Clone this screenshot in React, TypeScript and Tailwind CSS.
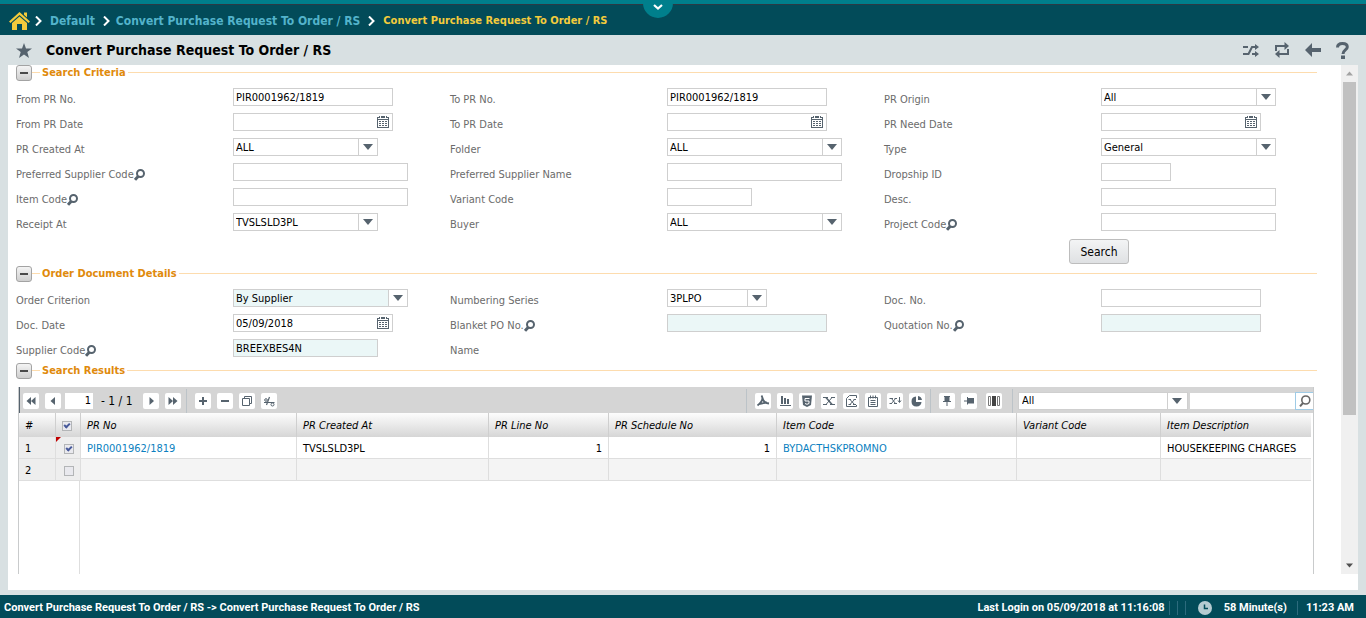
import React, { useId } from "react";

const SLATE = "#56636e";

function Caret() {
  return (
    <svg width="10" height="6" viewBox="0 0 10 6" aria-hidden="true">
      <path d="M0 0h10L5 6z" fill={SLATE} />
    </svg>
  );
}

function CalendarIcon() {
  return (
    <svg width="12" height="12" viewBox="0 0 12 12" shapeRendering="crispEdges" fill={SLATE} aria-hidden="true">
      <path d="M0 1h1v11H0zM11 1h1v11h-1zM0 11h12v1H0zM0 1h2v1H0zM10 1h2v1h-2zM2 0h1v2H2zM9 0h1v2H9zM4 0h4v2H4zM1 3h10v1H1z" />
      <path d="M2 5h2v1H2zM5 5h2v1H5zM8 5h2v1H8zM2 7h2v1H2zM5 7h2v1H5zM8 7h2v1H8zM2 9h2v1H2zM5 9h2v1H5zM8 9h2v1H8z" />
    </svg>
  );
}

function LensIcon() {
  return (
    <svg width="11" height="12" viewBox="0 0 11 12" fill="none" stroke={SLATE} aria-hidden="true">
      <circle cx="6.5" cy="4.5" r="3.500" strokeWidth="2" />
      <path d="M4.500 7L1 10.800" strokeWidth="3" />
    </svg>
  );
}

type FieldProps = {
  label: string;
  kind?: "text" | "date" | "select" | "none";
  value?: string;
  width?: string;
  lens?: boolean;
  tinted?: boolean;
};

const boxClass = "h-[18px] border border-[#cfcfcf] pl-0.5 pt-px text-[11px] leading-4 text-black outline-none";

function Field({ label, kind = "text", value = "", width = "w-40", lens, tinted }: FieldProps) {
  const id = useId();
  const bg = tinted ? "bg-[#ebf7f7]" : "bg-white";
  return (
    <div className="grid h-[25px] grid-cols-2 items-start">
      <div className="flex h-6 items-center whitespace-nowrap text-[#6b6b6b]">
        {kind === "none" ? <span>{label}</span> : <label htmlFor={id}>{label}</label>}
        {lens && (
          <button type="button" aria-label={`Look up ${label}`}>
            <LensIcon />
          </button>
        )}
      </div>
      {kind === "text" && <input id={id} defaultValue={value} className={`${boxClass} ${bg} ${width}`} />}
      {kind === "date" && (
        <div className={`relative ${width}`}>
          <input id={id} defaultValue={value} className={`${boxClass} ${bg} block w-full`} />
          <button type="button" aria-label={`Pick ${label}`} className="absolute inset-y-0 right-1 flex items-center">
            <CalendarIcon />
          </button>
        </div>
      )}
      {kind === "select" && (
        <div className={`relative ${width}`}>
          <select id={id} defaultValue={value} className={`${boxClass} ${bg} block w-full appearance-none rounded-none`}>
            <option>{value}</option>
          </select>
          <span className="pointer-events-none absolute inset-y-px right-px flex w-[19px] items-center justify-center border-l border-[#cfcfcf] bg-white pr-px">
            <Caret />
          </span>
        </div>
      )}
    </div>
  );
}

function SectionTitle({ children }: { children: string }) {
  return (
    <div className="mr-px flex h-4 items-center">
      <button
        type="button"
        aria-label={`Collapse ${children}`}
        className="flex size-4 items-center justify-center rounded-[3px] border border-[#a3a3a3] bg-gradient-to-b from-[#f4f4f4] to-[#cfcfcf]"
      >
        <span className="h-0.5 w-2 bg-[#4a4a4a]" />
      </button>
      <span className="mb-0.5 h-px w-2 bg-[#fddcae]" />
      <h2 className="px-0.5 text-[11px] font-bold leading-4 text-[#e08a0c]">{children}</h2>
      <span className="mb-0.5 h-px flex-1 bg-[#fddcae]" />
    </div>
  );
}

function Tool({ label, children }: { label: string; children: React.ReactNode }) {
  return (
    <button type="button" aria-label={label} className="flex size-4 shrink-0 items-center justify-center rounded-xs bg-white">
      <svg width="16" height="16" viewBox="0 0 16 16" fill={SLATE} stroke="none" aria-hidden="true">
        {children}
      </svg>
    </button>
  );
}

function Divider() {
  return <span className="h-6 w-px shrink-0 bg-[#bcc3c8]" />;
}

function Chevron() {
  return (
    <svg width="7" height="10" viewBox="0 0 7 10" fill="none" stroke="#fff" strokeWidth="2" aria-hidden="true">
      <path d="M1 0.5L5.5 5L1 9.5" />
    </svg>
  );
}

const columns = [
  { title: "PR No", width: "w-[216px]" },
  { title: "PR Created At", width: "w-48" },
  { title: "PR Line No", width: "w-[120px]" },
  { title: "PR Schedule No", width: "w-42" },
  { title: "Item Code", width: "w-60" },
  { title: "Variant Code", width: "w-36" },
  { title: "Item Description", width: "" },
];

function Tick({ checked, label }: { checked: boolean; label: string }) {
  return (
    <input
      type="checkbox"
      defaultChecked={checked}
      aria-label={label}
      className="relative block size-2.5 appearance-none border border-[#b3b5b7] bg-[#e9e9ee] after:absolute after:left-[2px] after:top-0 after:hidden after:h-1.5 after:w-1 after:rotate-45 after:border-b-2 after:border-r-2 after:border-[#47599a] checked:after:block"
    />
  );
}

function ResultsGrid() {
  const cell = "h-[22px] border-b border-r border-[#dedede] px-1.5 pb-0 pt-0.5 font-normal";
  const rowNumber = "bg-[#eeeeee]";
  const head = "h-6 border-r border-[#cfcfcf] pb-0 pt-px px-1.5 font-normal";
  return (
    <div className="ml-0.5 mr-1 flex h-[187px] flex-col border-x border-[#c9cbcc]">
      <div className="flex h-[26px] items-center border-l border-[#56636e] bg-[#d5d5d5] pl-[3px] pt-0.5">
        <div className="flex items-center gap-1.5">
          <Tool label="First page"><path d="M8 4v8L3.5 8zM12.5 4v8L8 8z" /></Tool>
          <Tool label="Previous page"><path d="M10 4v8L5.500 8z" /></Tool>
        </div>
        <input aria-label="Page" defaultValue="1" className="ml-1 h-4 w-7 bg-white pr-0.5 text-right text-[11px] text-black outline-none" />
        <span className="ml-2 w-[42px] whitespace-nowrap text-xs text-black">- 1 / 1</span>
        <div className="flex items-center gap-1.5">
          <Tool label="Next page"><path d="M6.500 4v8L11 8z" /></Tool>
          <Tool label="Last page"><path d="M3.500 4v8L8 8zM8 4v8l4.500-4z" /></Tool>
        </div>
        <div className="ml-[5px] mr-2 flex"><Divider /></div>
        <div className="flex items-center gap-1.5">
          <Tool label="Add row"><path d="M7 4h2v3h3v2H9v3H7V9H4V7h3z" /></Tool>
          <Tool label="Remove row"><path d="M4 7h8v2H4z" /></Tool>
          <Tool label="Copy row"><path d="M5.500 5.500v-2h7v7h-2M3.500 5.500h7v7h-7z" fill="none" stroke={SLATE} /></Tool>
          <Tool label="Cut row">
            <g fill="none" stroke={SLATE}><path d="M3 9.500h10.500M5.500 12L8.500 4" strokeWidth="1.200" /><circle cx="11.500" cy="11.500" r="1.500" /><circle cx="5" cy="7" r="1.300" /></g>
          </Tool>
        </div>

        <div className="ml-auto mr-2 flex"><Divider /></div>
        <div className="flex items-center gap-1.5">
          <Tool label="Export to PDF"><path d="M6.500 2.500c2 3 .5 6.500-4 10M7.500 5c.5 3 2 5 6.500 5.500M4 11l8-1.500" fill="none" stroke={SLATE} strokeWidth="1.800" /></Tool>
          <Tool label="Report"><path d="M3 12h11v1H3zM4 3h2v8H4zM7 5h2v6H7zM10 6h2v5h-2z" /></Tool>
          <Tool label="Export to HTML"><path d="M3 2.500h10l-1 9.500-4 2-4-2z" /><path d="M10.500 5.500H6v2.500h4v2.500l-2 .8-2-.8" fill="none" stroke="#fff" /></Tool>
          <Tool label="Export to spreadsheet"><path d="M2 4h5v1H2zM10 4h4v1h-4zM2 11h4v1H2zM9 11h5v1H9z" /><path d="M5 4.500l6 7" fill="none" stroke={SLATE} strokeWidth="1.600" /><path d="M11 4.500l-6 7" fill="none" stroke={SLATE} /></Tool>
          <Tool label="Spreadsheet document"><path d="M13.500 5V2.500h-7l-3 3v8h10V12M5.500 6.500H8M10.500 6.500H13M5.500 11.500H8M10 11.500h3M7 6.500l4.500 5M11.500 6.500l-4.500 5" fill="none" stroke={SLATE} /></Tool>
          <Tool label="Export to text"><path d="M3.500 4.500h9v9h-9zM5.500 7.500h5M5.500 9.500h5M5.500 11.500h5M5.500 2.500v3M10.500 2.500v3M8 2.500v3" fill="none" stroke={SLATE} /></Tool>
          <Tool label="Import spreadsheet"><path d="M2.500 5.500H6M7.500 5.500H10M2.500 10.500H5M7 10.500h3M4.500 5.500l4 5M8.500 5.500l-4 5M12.500 4v5M11 7.500l1.500 2L14 7.500" fill="none" stroke={SLATE} /></Tool>
          <Tool label="Chart"><path d="M7 3.500v5.500h5.500a5 5 0 1 1-5.500-5.500zM9 3a5 5 0 0 1 4 4H9z" /></Tool>
        </div>
        <div className="ml-[5px] mr-2 flex"><Divider /></div>
        <div className="flex items-center gap-1.5">
          <Tool label="Pin column"><path d="M5 3h6v1h-.5v4H12v1H8.500v4h-1V9H4V8h1.500V4H5z" /></Tool>
          <Tool label="Pin row"><path d="M3 7.500h3V4h1v1h6v5.500H7v1H6V8.500H3z" /></Tool>
        </div>
        <div className="ml-[9px] flex">
          <Tool label="Column layout"><path d="M2.500 3.500h2v9h-2zM11.500 3.500h2v9h-2z" fill="none" stroke="#777" /><path d="M6 3h4v10H6z" fill="#444" /></Tool>
        </div>
        <div className="ml-2.5 mr-[5px] flex"><Divider /></div>
        <div className="relative w-[170px]">
          <select aria-label="Filter column" defaultValue="All" className="block h-[18px] w-full appearance-none border border-[#cfcfcf] bg-white pl-[3px] text-[11px] leading-4 text-black outline-none">
            <option>All</option>
          </select>
          <span className="pointer-events-none absolute inset-y-px right-0 flex w-[21px] items-center justify-center border-l border-[#cfcfcf] pr-0.5">
            <Caret />
          </span>
        </div>
        <input aria-label="Filter text" className="ml-0.5 h-4 w-[105px] bg-white px-0.5 text-[11px] outline-none" />
        <button type="button" aria-label="Apply filter" className="flex h-[18px] w-[18px] items-center justify-center border-y border-l border-[#9fcbe6] bg-white">
          <svg width="12" height="12" viewBox="0 0 12 12" fill="none" stroke="#666" aria-hidden="true">
            <circle cx="6.800" cy="5" r="4" strokeWidth="1.600" />
            <path d="M4 8L1 11.300" strokeWidth="2" />
          </svg>
        </button>
      </div>
      <div className="flex flex-1 flex-col pr-0.5">
        <table className="w-full table-fixed border-separate border-spacing-0 text-left text-[11px] leading-4 text-black">
          <thead>
            <tr className="bg-gradient-to-b from-[#fdfdfd] to-[#d6d6d6] italic">
              <th className={`${head} w-[37px]`}>#</th>
              <th className={`${head} w-[25px]`}><Tick checked label="Select all rows" /></th>
              {columns.map((c) => (
                <th key={c.title} className={`${head} ${c.width} last:border-r-0`}>{c.title}</th>
              ))}
            </tr>
          </thead>
          <tbody>
            <tr>
              <td className={`${cell} ${rowNumber}`}>1</td>
              <td className={`${cell} relative ${rowNumber}`}>
                <svg width="5" height="5" viewBox="0 0 5 5" className="absolute left-0 top-0" aria-hidden="true"><path d="M0 0h5L0 5z" fill="#c00000" /></svg>
                <div className="pl-0.5"><Tick checked label="Select row 1" /></div>
              </td>
              <td className={cell}><a href="#pr" className="text-[#0b7fc0]">PIR0001962/1819</a></td>
              <td className={cell}>TVSLSLD3PL</td>
              <td className={`${cell} text-right`}>1</td>
              <td className={`${cell} text-right`}>1</td>
              <td className={cell}><a href="#item" className="text-[#0b7fc0]">BYDACTHSKPROMNO</a></td>
              <td className={cell} />
              <td className={`${cell} border-r-0`}>HOUSEKEEPING CHARGES</td>
            </tr>
            <tr className="bg-[#f4f4f4]">
              <td className={`${cell} ${rowNumber}`}>2</td>
              <td className={`${cell} ${rowNumber}`}><div className="pl-0.5"><Tick checked={false} label="Select row 2" /></div></td>
              {columns.map((c) => (
                <td key={c.title} className={`${cell} last:border-r-0`} />
              ))}
            </tr>
          </tbody>
        </table>
        <div className="w-[61px] flex-1 border-r border-[#dedede]" />
      </div>
    </div>
  );
}

export default function App() {
  return (
    <div className="flex h-screen flex-col overflow-hidden bg-[#d8e0e2] font-['DejaVu_Sans_Condensed','DejaVu_Sans',sans-serif] text-[11px] leading-4">
      <header className="relative h-[35px] shrink-0 border-t-4 border-[#007f8c] bg-[#024b59]">
        <nav aria-label="Breadcrumb" className="flex h-[31px] items-center border-t border-[#2b3a45] pl-2 pt-0.5 font-bold">
          <a href="#home" aria-label="Home">
            <svg width="23" height="20" viewBox="0 0 23 20" fill="#f3cb3c" aria-hidden="true">
              <path d="M11.500 1L22 10.500l-1.500 1.500L11.500 4 2.500 12 1 10.500zM16 1.500h3v5l-3-2.700z" />
              <path d="M11.500 5.500L19 12v7h-5v-6H9v6H4v-7z" />
            </svg>
          </a>
          <span className="ml-1"><Chevron /></span>
          <a href="#default" className="ml-2 text-xs text-[#53b3cb]">Default</a>
          <span className="ml-2"><Chevron /></span>
          <a href="#convert" className="ml-1.5 text-xs text-[#53b3cb]">Convert Purchase Request To Order / RS</a>
          <span className="ml-2"><Chevron /></span>
          <span className="ml-2 text-[11px] text-[#f3cb3c]">Convert Purchase Request To Order / RS</span>
        </nav>
        <button type="button" aria-label="Expand menu" className="absolute -top-1 left-[643px] flex h-[18px] w-[30px] items-center justify-center rounded-b-full bg-[#007f8c] pb-1">
          <svg width="10" height="6" viewBox="0 0 10 6" fill="none" stroke="#fff" strokeWidth="2.200" aria-hidden="true"><path d="M1 1l4 3.500L9 1" /></svg>
        </button>
      </header>

      <div className="flex h-[30px] shrink-0 items-center pl-4 pr-[17px]">
        <svg width="16" height="15" viewBox="0 0 16 15" fill={SLATE} aria-hidden="true"><path d="M8 0l2 5.500h6l-4.700 3.500L13 15 8 11.500 3 15l1.700-6L0 5.500h6z" /></svg>
        <h1 className="ml-3.5 text-sm font-bold text-black">Convert Purchase Request To Order / RS</h1>
        <div className="ml-auto flex items-center gap-[15px]">
          <button type="button" aria-label="Related links">
            <svg width="16" height="13" viewBox="0 0 16 13" aria-hidden="true"><path d="M0 3h5M0 10h5.500l3.500-7h4M9 10h4" fill="none" stroke={SLATE} strokeWidth="2" /><path d="M12 0l4 3-4 3zM12 7l4 3-4 3z" fill={SLATE} /></svg>
          </button>
          <button type="button" aria-label="Refresh">
            <svg width="16" height="16" viewBox="0 0 16 16" aria-hidden="true"><path d="M2 9V4h9M14 7v5H5" fill="none" stroke={SLATE} strokeWidth="2" /><path d="M10.500 0l4.500 4-4.500 4zM5.500 8L1 12l4.500 4z" fill={SLATE} /></svg>
          </button>
          <button type="button" aria-label="Back">
            <svg width="16" height="14" viewBox="0 0 16 14" fill={SLATE} aria-hidden="true"><path d="M7 0v5h9v4H7v5L0 7z" /></svg>
          </button>
          <button type="button" aria-label="Help">
            <svg width="13" height="17" viewBox="0 0 13 17" aria-hidden="true"><path d="M1.500 5.500C1.500 2.500 3.500 1.500 6.500 1.500s4.800 1 4.800 3.500C11.300 8 7 8 7 12" fill="none" stroke={SLATE} strokeWidth="3" /><path d="M5 13.500h4V17H5z" fill={SLATE} /></svg>
          </button>
        </div>
      </div>

      <main className="mx-2 mb-[5px] flex min-h-0 flex-1 flex-col bg-white pb-4">
        <div className="flex min-h-0 flex-1">
          <div className="min-w-0 flex-1 overflow-hidden pl-2 pr-[23px]">
            <SectionTitle>Search Criteria</SectionTitle>
            <div className="grid grid-cols-3 pt-[7px]">
              <Field label="From PR No." value="PIR0001962/1819" />
              <Field label="To PR No." value="PIR0001962/1819" />
              <Field label="PR Origin" kind="select" value="All" width="w-[175px]" />
              <Field label="From PR Date" kind="date" />
              <Field label="To PR Date" kind="date" />
              <Field label="PR Need Date" kind="date" />
              <Field label="PR Created At" kind="select" value="ALL" width="w-[145px]" />
              <Field label="Folder" kind="select" value="ALL" width="w-[175px]" />
              <Field label="Type" kind="select" value="General" width="w-[175px]" />
              <Field label="Preferred Supplier Code" lens width="w-[175px]" />
              <Field label="Preferred Supplier Name" width="w-[175px]" />
              <Field label="Dropship ID" width="w-[70px]" />
              <Field label="Item Code" lens width="w-[175px]" />
              <Field label="Variant Code" width="w-[85px]" />
              <Field label="Desc." width="w-[175px]" />
              <Field label="Receipt At" kind="select" value="TVSLSLD3PL" width="w-[145px]" />
              <Field label="Buyer" kind="select" value="ALL" width="w-[175px]" />
              <Field label="Project Code" lens width="w-[175px]" />
              <div className="col-start-3 flex h-7 items-start pl-[185px] pt-px">
                <button type="button" className="h-[25px] w-[60px] rounded-[3px] border border-[#bdbdbd] bg-gradient-to-b from-[#f3f4f5] to-[#dfe1e3] text-xs text-black">Search</button>
              </div>
            </div>

            <SectionTitle>Order Document Details</SectionTitle>
            <div className="-mb-px grid grid-cols-3 pt-[7px]">
              <Field label="Order Criterion" kind="select" value="By Supplier" width="w-[175px]" tinted />
              <Field label="Numbering Series" kind="select" value="3PLPO" width="w-[100px]" />
              <Field label="Doc. No." />
              <Field label="Doc. Date" kind="date" value="05/09/2018" />
              <Field label="Blanket PO No." lens tinted />
              <Field label="Quotation No." lens tinted />
              <Field label="Supplier Code" lens value="BREEXBES4N" width="w-[145px]" tinted />
              <Field label="Name" kind="none" />
            </div>

            <SectionTitle>Search Results</SectionTitle>
            <div className="pt-2">
              <ResultsGrid />
            </div>
          </div>

          <div className="flex w-[17px] shrink-0 flex-col items-center justify-between bg-[#f0f0f0]" aria-hidden="true">
            <svg width="17" height="17" viewBox="0 0 17 17" className="shrink-0"><path d="M5 10.500h7l-3.500-4z" fill="#a3a3a3" /></svg>
            <div className="flex w-[13px] flex-1 flex-col">
              <div className="h-[70%] bg-[#c1c1c1]" />
            </div>
            <svg width="17" height="17" viewBox="0 0 17 17" className="shrink-0"><path d="M5 6.500h7l-3.500 4z" fill="#505050" /></svg>
          </div>
        </div>
      </main>

      <footer className="flex h-[23px] shrink-0 items-center bg-[#024b59] pl-1 pr-3 pt-0.5 font-[Roboto,sans-serif] font-bold text-white">
        <span>Convert Purchase Request To Order / RS -&gt; Convert Purchase Request To Order / RS</span>
        <span className="ml-auto">Last Login on 05/09/2018 at 11:16:08</span>
        <span className="ml-1 flex gap-[7px]">
          <i className="h-3.5 w-px bg-[#2d6b7d]" />
          <i className="h-3.5 w-px bg-[#2d6b7d]" />
          <i className="h-3.5 w-px bg-[#2d6b7d]" />
        </span>
        <svg width="14" height="14" viewBox="0 0 14 14" className="ml-3" aria-hidden="true"><circle cx="7" cy="7" r="7" fill="#b5cbd1" /><path d="M6.500 3.500v4H10" fill="none" stroke="#024b59" strokeWidth="1.500" /></svg>
        <span className="ml-3">58 Minute(s)</span>
        <i className="ml-2.5 h-3.5 w-px bg-[#2d6b7d]" />
        <span className="ml-2">11:23 AM</span>
      </footer>
    </div>
  );
}
